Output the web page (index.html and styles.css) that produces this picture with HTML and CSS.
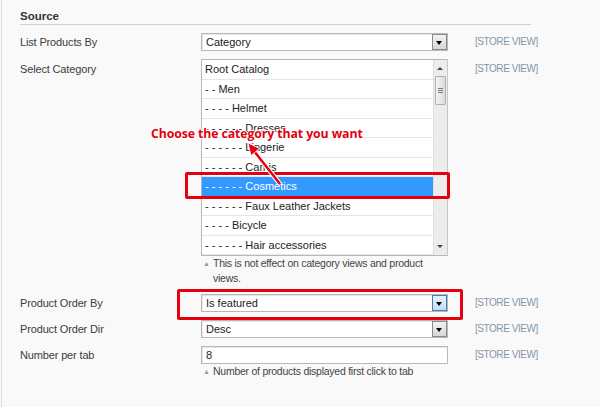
FILE: index.html
```html
<!DOCTYPE html>
<html>
<head>
<meta charset="utf-8">
<link rel="stylesheet" href="styles.css">
</head>
<body>
<div class="page">
  <div class="fieldset">
    <h3 class="legend">Source</h3>
    <div class="form">
      <div class="row">
        <div class="label">List Products By</div>
        <div class="value">
          <div class="select"><span class="sel-text">Category</span><span class="btn"></span></div>
        </div>
        <div class="scope">[STORE VIEW]</div>
      </div>

      <div class="row row-list">
        <div class="label label-list">Select Category</div>
        <div class="value">
          <div class="listbox">
            <ul class="options">
              <li>Root Catalog</li>
              <li>- - Men</li>
              <li>- - - - Helmet</li>
              <li>- - - - - - Dresses</li>
              <li>- - - - - - Lingerie</li>
              <li>- - - - - - Camis</li>
              <li class="selected">- - - - - - Cosmetics</li>
              <li>- - - - - - Faux Leather Jackets</li>
              <li>- - - - Bicycle</li>
              <li>- - - - - - Hair accessories</li>
            </ul>
            <div class="scrollbar">
              <span class="arrow-up"></span>
              <span class="thumb"><i></i><i></i><i></i></span>
              <span class="arrow-down"></span>
            </div>
          </div>
          <p class="hint"><span class="tri">▲</span>This is not effect on category views and product views.</p>
        </div>
        <div class="scope">[STORE VIEW]</div>
      </div>

      <div class="row row-gap">
        <div class="label">Product Order By</div>
        <div class="value">
          <div class="select"><span class="sel-text">Is featured</span><span class="btn btn-hover"></span></div>
        </div>
        <div class="scope">[STORE VIEW]</div>
      </div>

      <div class="row">
        <div class="label">Product Order Dir</div>
        <div class="value">
          <div class="select"><span class="sel-text">Desc</span><span class="btn"></span></div>
        </div>
        <div class="scope">[STORE VIEW]</div>
      </div>

      <div class="row">
        <div class="label">Number per tab</div>
        <div class="value">
          <div class="input">8</div>
          <p class="hint hint-single"><span class="tri">▲</span>Number of products displayed first click to tab</p>
        </div>
        <div class="scope">[STORE VIEW]</div>
      </div>
    </div>
  </div>

  <div class="callout-box box-cat"></div>
  <div class="callout-box box-order"></div>
  <div class="callout-text">Choose the category that you want</div>
  <svg class="callout-arrow" width="600" height="407" viewBox="0 0 600 407">
    <line x1="278" y1="184" x2="252" y2="151" stroke="#ffffff" stroke-width="4.5"/>
    <line x1="278" y1="184" x2="252" y2="151" stroke="#e3000f" stroke-width="2.5"/>
    <polygon points="246,143 257.5,148.5 249,155.5" fill="#e3000f" stroke="#ffffff" stroke-width="0.8"/>
  </svg>
</div>
</body>
</html>
```

FILE: styles.css
```css
* { box-sizing: border-box; }
html, body { margin: 0; padding: 0; }
body {
  background: #f9f9f9;
  font-family: "Liberation Sans", Arial, sans-serif;
  color: #444;
}
.page {
  position: relative;
  width: 600px;
  height: 407px;
  margin-left: 1px;
  border-left: 1px solid #dcdcdc;
  overflow: hidden;
}
.fieldset { padding-left: 18px; }
.legend {
  margin: 0;
  width: 511px;
  padding-top: 9px;
  line-height: 15px;
  font-size: 11.5px;
  font-weight: bold;
  color: #333;
  border-bottom: 1px solid #d0d0d0;
}
.form { padding-top: 8px; }
.row {
  display: flex;
  align-items: flex-start;
  margin-bottom: 8px;
}
.row-gap { margin-top: 3px; }
.label {
  width: 181px;
  flex: none;
  font-size: 11px;
  line-height: 18px;
  letter-spacing: -0.15px;
  color: #3c3c3c;
}
.label-list { padding-top: 1px; }
.value { width: 247px; flex: none; }
.scope {
  margin-left: 27px;
  font-size: 10px;
  letter-spacing: -0.45px;
  line-height: 18px;
  color: #8696a5;
}
.row-list .scope { padding-top: 1px; }

.select, .input {
  display: flex;
  align-items: center;
  height: 18px;
  background: #fff;
  border: 1px solid #b8b8b8;
  box-shadow: inset 1px 1px 0 #e6e6e6;
  font-size: 11px;
  color: #222;
  padding-left: 4px;
}
.sel-text { flex: 1; }
.btn {
  position: relative;
  width: 15px;
  height: 16px;
  border: 1px solid #8a8a8a;
  background: linear-gradient(#f2f2f2, #d8d8d8);
}
.btn::after {
  content: "";
  position: absolute;
  left: 3px;
  top: 6px;
  border-left: 3.5px solid transparent;
  border-right: 3.5px solid transparent;
  border-top: 4px solid #000;
}
.btn-hover {
  border-color: #3f80b8;
  background: linear-gradient(#e4f1fb, #c3dff4);
}

.listbox {
  position: relative;
  display: flex;
  height: 197px;
  background: #fff;
  border: 1px solid #b8b8b8;
  border-right-color: #c8c8c8;
}
.options {
  list-style: none;
  margin: 0;
  padding: 0;
  flex: 1;
  font-size: 11px;
  color: #222;
}
.options li {
  height: 19.5px;
  line-height: 18.5px;
  padding-left: 3px;
  border-bottom: 1px solid #e6e6e6;
  white-space: nowrap;
}
.options li.selected {
  background: #3399ff;
  color: #fff;
  border-bottom-color: #3399ff;
}
.scrollbar {
  position: relative;
  width: 14px;
  flex: none;
  background: #ececec;
  border-left: 1px solid #dedede;
}
.arrow-up, .arrow-down {
  position: absolute;
  left: 3px;
  border-left: 3.5px solid transparent;
  border-right: 3.5px solid transparent;
}
.arrow-up { top: 7px; border-bottom: 3px solid #444; }
.arrow-down { bottom: 7px; border-top: 3px solid #444; }
.thumb {
  position: absolute;
  left: 1px;
  top: 16px;
  width: 11px;
  height: 29px;
  border: 1px solid #b0b0b0;
  border-radius: 1px;
  background: linear-gradient(90deg, #f4f4f4, #dcdcdc);
  display: flex;
  flex-direction: column;
  align-items: center;
  justify-content: center;
  gap: 1px;
}
.thumb i {
  display: block;
  width: 5px;
  height: 1px;
  background: #7a7a7a;
}

.hint {
  margin: 0;
  padding: 0 0 0 12px;
  text-indent: -10px;
  font-size: 10.5px;
  letter-spacing: -0.25px;
  line-height: 15px;
  color: #444;
  width: 236px;
}
.hint-single { width: auto; white-space: nowrap; }
.tri {
  display: inline-block;
  text-indent: 0;
  width: 10px;
  font-size: 7px;
  color: #999;
  vertical-align: 1px;
}

.callout-box {
  position: absolute;
  border: 3px solid #e3000f;
  border-radius: 2px;
}
.box-cat { left: 183px; top: 172px; width: 265px; height: 27px; }
.box-order { left: 175px; top: 289px; width: 286px; height: 31px; }
.callout-text {
  position: absolute;
  left: 149px;
  top: 126px;
  font-family: "Open Sans", "Liberation Sans", sans-serif;
  font-weight: bold;
  font-size: 12.3px;
  line-height: 16px;
  letter-spacing: -0.1px;
  color: #e3000f;
  white-space: nowrap;
  text-shadow: 1px 0 0 #fff, -1px 0 0 #fff, 0 1px 0 #fff, 0 -1px 0 #fff, 1px 1px 1px #fff;
}
.callout-arrow {
  position: absolute;
  left: 0;
  top: 0;
  pointer-events: none;
}
```
